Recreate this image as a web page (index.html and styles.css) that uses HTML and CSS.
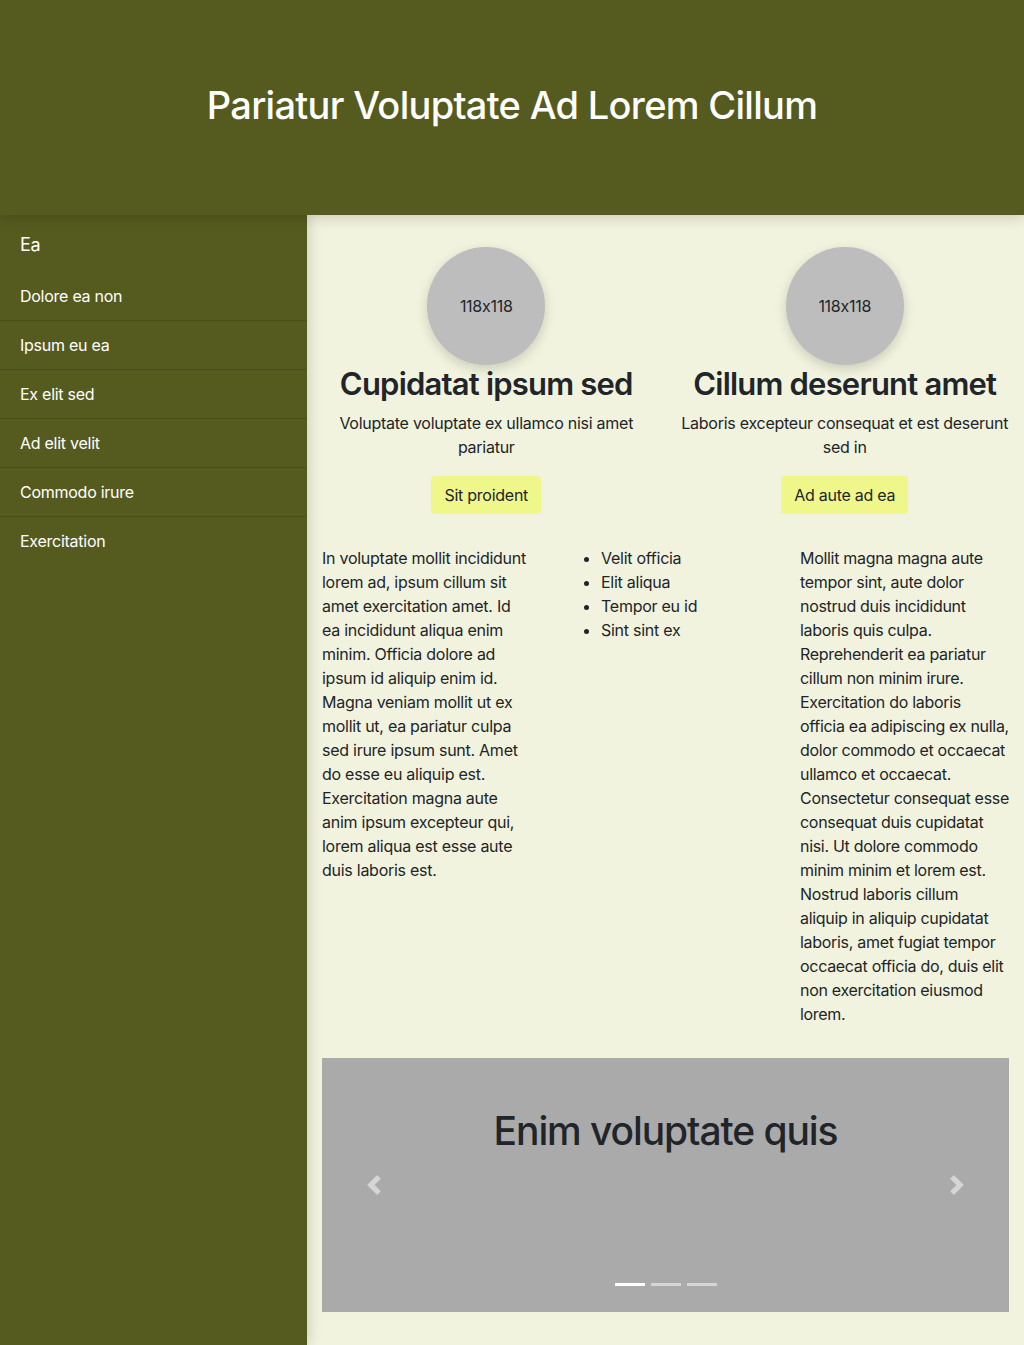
FILE: index.html
```html
<!DOCTYPE html>
<html lang="en">
<head>
<meta charset="utf-8">
<title>Pariatur Voluptate Ad Lorem Cillum</title>
<link rel="stylesheet" href="styles.css">
</head>
<body>
<header class="site-header">
  <h1 class="site-title">Pariatur Voluptate Ad Lorem Cillum</h1>
</header>
<div class="layout">
  <nav class="sidebar">
    <h5 class="sidebar-title">Ea</h5>
    <ul class="nav-list">
      <li class="nav-item">Dolore ea non</li>
      <li class="nav-item">Ipsum eu ea</li>
      <li class="nav-item">Ex elit sed</li>
      <li class="nav-item">Ad elit velit</li>
      <li class="nav-item">Commodo irure</li>
      <li class="nav-item">Exercitation</li>
    </ul>
  </nav>
  <main class="main">
    <div class="row cards">
      <div class="card">
        <div class="avatar">118x118</div>
        <h2 class="card-title">Cupidatat ipsum sed</h2>
        <p class="card-text">Voluptate voluptate ex ullamco nisi amet pariatur</p>
        <span class="btn">Sit proident</span>
      </div>
      <div class="card">
        <div class="avatar">118x118</div>
        <h2 class="card-title">Cillum deserunt amet</h2>
        <p class="card-text">Laboris excepteur consequat et est deserunt sed in</p>
        <span class="btn">Ad aute ad ea</span>
      </div>
    </div>
    <div class="row cols">
      <div class="col">
        <p class="body-text">In voluptate mollit incididunt lorem ad, ipsum cillum sit amet exercitation amet. Id ea incididunt aliqua enim minim. Officia dolore ad ipsum id aliquip enim id. Magna veniam mollit ut ex mollit ut, ea pariatur culpa sed irure ipsum sunt. Amet do esse eu aliquip est. Exercitation magna aute anim ipsum excepteur qui, lorem aliqua est esse aute duis laboris est.</p>
      </div>
      <div class="col">
        <ul class="bullets">
          <li>Velit officia</li>
          <li>Elit aliqua</li>
          <li>Tempor eu id</li>
          <li>Sint sint ex</li>
        </ul>
      </div>
      <div class="col">
        <p class="body-text tight">Mollit magna magna aute tempor sint, aute dolor nostrud duis incididunt laboris quis culpa. Reprehenderit ea pariatur cillum non minim irure. Exercitation do laboris officia ea adipiscing ex nulla, dolor commodo et occaecat ullamco et occaecat. Consectetur consequat esse consequat duis cupidatat nisi. Ut dolore commodo minim minim et lorem est. Nostrud laboris cillum aliquip in aliquip cupidatat laboris, amet fugiat tempor occaecat officia do, duis elit non exercitation eiusmod lorem.</p>
      </div>
    </div>
    <div class="carousel">
      <h1 class="carousel-title">Enim voluptate quis</h1>
      <span class="carousel-control prev">
        <svg width="20" height="20" viewBox="0 0 8 8"><path d="M5.25 0l-4 4 4 4 1.5-1.5L4.25 4l2.5-2.5L5.25 0z" fill="currentColor"/></svg>
      </span>
      <span class="carousel-control next">
        <svg width="20" height="20" viewBox="0 0 8 8"><path d="M2.75 0l-1.5 1.5L3.75 4l-2.5 2.5L2.75 8l4-4-4-4z" fill="currentColor"/></svg>
      </span>
      <ol class="indicators">
        <li class="indicator active"></li>
        <li class="indicator"></li>
        <li class="indicator"></li>
      </ol>
    </div>
  </main>
</div>
</body>
</html>
```

FILE: styles.css
```css
* { box-sizing: border-box; }

html, body {
  margin: 0;
  padding: 0;
}

body {
  font-family: Inter, "Noto Sans", "Liberation Sans", sans-serif;
  font-feature-settings: "calt" 0;
  font-size: 16px;
  line-height: 24px;
  letter-spacing: -0.26px;
  color: #212529;
  background: #f1f3de;
}

.site-header {
  position: relative;
  z-index: 2;
  height: 215px;
  background: #555b1f;
  display: flex;
  align-items: center;
  justify-content: center;
  box-shadow: 0 2px 14px rgba(0, 0, 0, 0.18);
}

.site-title {
  margin: 0 0 4px;
  color: #fff;
  font-size: 38px;
  font-weight: 500;
  line-height: 1.2;
  letter-spacing: -0.7px;
}

.layout {
  display: flex;
  min-height: 1130px;
}

.sidebar {
  position: relative;
  z-index: 1;
  width: 307px;
  flex: none;
  background: #555b1f;
  color: #fff;
  box-shadow: 2px 0 12px rgba(0, 0, 0, 0.15);
}

.sidebar-title {
  margin: 0;
  padding: 19px 20px 17px;
  font-size: 18px;
  font-weight: 400;
  line-height: 21px;
}

.nav-list {
  list-style: none;
  margin: 0;
  padding: 0;
}

.nav-item {
  padding: 12px 20px;
  font-size: 16px;
  line-height: 24px;
}

.nav-item + .nav-item {
  border-top: 1px solid #494e1a;
}

.main {
  flex: 1;
  padding: 32px 15px 33px;
  background: #f1f3de;
}

.row {
  display: flex;
  margin: 0 -15px;
}

.cards {
  margin-bottom: 32px;
}

.card {
  flex: 1 1 0;
  padding: 0 15px;
  display: flex;
  flex-direction: column;
  align-items: center;
  text-align: center;
}

.avatar {
  width: 118px;
  height: 118px;
  border-radius: 50%;
  background: #bdbdbd;
  display: flex;
  align-items: center;
  justify-content: center;
  font-size: 16px;
  color: #212529;
  box-shadow: 0 4px 12px rgba(0, 0, 0, 0.16);
}

.card-title {
  margin: 0 0 8px;
  font-size: 31px;
  font-weight: 600;
  line-height: 38px;
  letter-spacing: -0.8px;
}

.card-text {
  margin: 0 0 17px;
}

.btn {
  display: inline-block;
  padding: 7px 13px;
  border-radius: 4px;
  background: #eff78b;
  color: #212529;
  line-height: 24px;
}

.cols {
  margin-bottom: 32px;
}

.col {
  flex: 1 1 0;
  padding: 0 15px;
}

.body-text {
  margin: 0;
}

.body-text.tight {
  letter-spacing: -0.3px;
}

.bullets {
  margin: 0;
  padding-left: 40px;
}

.carousel {
  position: relative;
  height: 254px;
  background: #aaaaaa;
  padding-top: 49px;
  text-align: center;
}

.carousel-title {
  margin: 0;
  font-size: 39px;
  font-weight: 500;
  line-height: 48px;
  letter-spacing: -1.1px;
}

.carousel-control {
  position: absolute;
  top: 50%;
  transform: translateY(-50%);
  color: rgba(255, 255, 255, 0.5);
  display: flex;
}

.carousel-control.prev { left: 42px; }
.carousel-control.next { right: 42px; }

.indicators {
  position: absolute;
  left: 0;
  right: 0;
  bottom: 26px;
  display: flex;
  justify-content: center;
  list-style: none;
  margin: 0;
  padding: 0;
  gap: 6px;
}

.indicator {
  width: 30px;
  height: 3px;
  background: rgba(255, 255, 255, 0.5);
}

.indicator.active {
  background: #fff;
}
```
